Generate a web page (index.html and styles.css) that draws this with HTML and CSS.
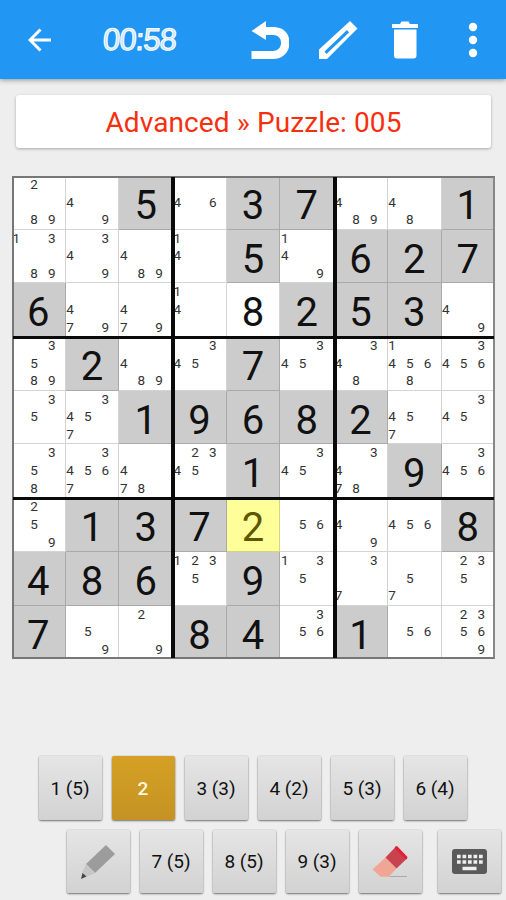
FILE: index.html
```html
<!DOCTYPE html>
<html lang="en">
<head>
<meta charset="utf-8">
<title>Sudoku</title>
<link rel="stylesheet" href="styles.css">
</head>
<body>
<header class="bar">
  <svg class="back" width="24" height="24" viewBox="0 0 24 24"><path d="M23 12H2M12.500 1.500L2 12L12.500 22.500"/></svg>
  <div class="timer">00:58</div>
  <svg class="undo" width="40" height="40" viewBox="0 0 40 40"><path d="M2.500 11L17 1V7H24C33.500 7 40.500 12.500 40.500 22.500S33.500 39 24 39H2.500V31H24C29 31 32 27.500 32 22.800S29 15 24 15H17V20Z"/></svg>
  <svg class="edit" width="40" height="40" viewBox="0 0 40 40"><path fill-rule="evenodd" d="M1 39V29.500L32 1L39.500 8.500L9 39ZM6.500 31.500L8.500 34L31 12.500L29 10Z"/></svg>
  <svg class="trash" width="28" height="38" viewBox="0 0 28 38"><path d="M1 3H9L10.500 .5H17.500L19 3H27V7H1ZM3 8.500H25.500V34.500Q25.500 37.500 22.500 37.500H6Q3 37.500 3 34.500Z"/></svg>
  <svg class="more" width="10" height="36" viewBox="0 0 10 36"><circle cx="5" cy="5" r="4.200"/><circle cx="5" cy="18" r="4.200"/><circle cx="5" cy="31" r="4.200"/></svg>
</header>
<main>
  <h1 class="title"><span>Advanced » Puzzle: 005</span></h1>
  <section class="board" id="board"></section>
  <div class="keys top">
    <div class="key">1 (5)</div><div class="key active">2</div><div class="key">3 (3)</div><div class="key">4 (2)</div><div class="key">5 (3)</div><div class="key">6 (4)</div>
  </div>
  <div class="keys bottom">
    <div class="key"><svg width="36" height="36" viewBox="0 0 36 36"><path fill="#9c9c9c" d="M26 1L35 10L15 29L6 20Z"/><path fill="#c6c6c6" d="M6 20L15 29L6 33L2 29Z"/><path fill="#454545" d="M2.500 29L6.500 32.500L1 35Z"/></svg></div>
    <div class="key">7 (5)</div><div class="key">8 (5)</div><div class="key">9 (3)</div>
    <div class="key"><svg width="36" height="34" viewBox="0 0 36 34"><path fill="#f0a595" d="M13.500 12.500L24.500 23.500L16.500 32H9L.5 24.500Z"/><path fill="#c9434f" d="M13.500 12.500L24 1.500L35.500 13L24.500 23.500Z"/><path fill="#e21f3d" d="M24 1Q24.800 1 25.500 1.500L35 11.500Q35.800 12.500 35 13.500L34 14.500L22.500 3Z"/><path d="M9 31.500H35" stroke="#a9a9b2"/><path d="M9 31.500H18" stroke="#eab58c"/></svg></div>
    <div class="key last"><svg width="35" height="25" viewBox="0 0 35 25"><rect width="35" height="25" rx="3" fill="#5a5a5a"/><path d="M5 7.500H31M5 13H31" stroke="#eee" stroke-width="3.500" stroke-dasharray="3.700 1.800"/><path d="M10.500 19.500H24.500" stroke="#eee" stroke-width="3.500"/></svg></div>
  </div>
</main>
<script src="board.js"></script>
</body>
</html>
```
FILE: board.js
```js
// "gN" is a given, "pN" a placed digit, "sN" the selected one; other strings are pencil marks.
const rows = [
  "289 49 g5 46 g3 g7 489 48 g1",
  "1389 349 489 14 g5 149 g6 g2 g7",
  "g6 479 479 14 p8 g2 g5 g3 49",
  "3589 g2 489 345 g7 345 348 14568 3456",
  "35 3457 g1 g9 g6 g8 g2 457 345",
  "358 34567 478 2345 g1 345 3478 g9 3456",
  "259 g1 g3 g7 s2 56 49 456 g8",
  "g4 g8 g6 1235 g9 135 37 57 235",
  "g7 59 29 g8 g4 356 g1 56 23569"
];
const kinds = { g: "given", p: "placed", s: "selected" };
const board = document.getElementById("board");
for (const row of rows) {
  for (const value of row.split(" ")) {
    const cell = document.createElement("div");
    cell.className = "cell";
    if (kinds[value[0]]) {
      cell.classList.add("big", kinds[value[0]]);
      cell.textContent = value[1];
    } else {
      cell.classList.add("notes");
      for (let n = 1; n <= 9; n++) {
        const mark = document.createElement("span");
        if (value.includes(n)) mark.textContent = n;
        cell.append(mark);
      }
    }
    board.append(cell);
  }
}
for (const name of ["v1", "v2", "h1", "h2"]) {
  const line = document.createElement("i");
  line.className = "line " + name;
  board.append(line);
}
```
FILE: styles.css
```css
* { box-sizing: border-box; }
body { margin: 0; height: 900px; overflow: hidden; background: #eee; font-family: Roboto, "Liberation Sans", sans-serif; }
.bar { height: 79px; background: #2196f3; display: flex; align-items: center; padding: 1px 0 0 28px; box-shadow: 0 1px 5px rgba(0,0,0,.4); }
.bar svg { fill: #fff; flex: none; }
.bar .back { fill: none; stroke: #fff; stroke-width: 3; }
.timer { width: 80px; margin-left: 51px; white-space: nowrap; font: 31px/40px "Liberation Sans", sans-serif; letter-spacing: -.9px; color: #c4e2fc; -webkit-text-stroke: 1.1px #fff; transform: skewX(-4deg); }
.undo { margin-left: 66px; }
.edit { margin-left: 29px; }
.trash { margin-left: 33px; }
.bar .more { margin-left: 49px; }
.title { margin: 16px 15px 0 16px; height: 53px; background: #fff; border-radius: 3px; box-shadow: 0 1px 3px rgba(0,0,0,.3); text-align: center; font-weight: 400; font-size: 28px; line-height: 56px; letter-spacing: .1px; color: #f5300f; }
.board { position: relative; margin: 28px 0 0 12px; width: 483.300px; height: 483.300px; display: grid; grid-template: repeat(9, 53.700px) / repeat(9, 53.700px); background: #fff; }
.board::after { content: ""; position: absolute; inset: 0; border: 2px solid #777; border-right-color: #888; }
.cell { border: solid rgba(0,0,0,.17); border-width: 0 1px 1px 0; }
.big { font-size: 40px; line-height: 60px; text-align: center; color: #111; overflow: hidden; }
.given { background: #ccc; }
.selected { background: #ffff99; color: #5c5700; }
.notes { display: grid; grid-template: repeat(3, 17.700px) / repeat(3, 17.700px); font-size: 13.500px; line-height: 17px; text-align: center; color: #333; }
.notes span { transform: translateX(-4.500px); }
.line { position: absolute; background: #0a0a0a; z-index: 1; }
.v1, .v2 { top: 1px; bottom: 1px; width: 4px; }
.v1 { left: 159px; }
.v2 { left: 320.500px; }
.h1, .h2 { left: 1px; right: 1px; height: 3.500px; }
.h1 { top: 159.500px; }
.h2 { top: 320.500px; }
.keys { display: flex; gap: 10px; }
.top { margin: 97px 0 0 39px; }
.bottom { margin: 10px 0 0 67px; }
.key { width: 63px; height: 63.500px; display: flex; align-items: center; justify-content: center; padding: 0 1px 0 0; border-radius: 2px; background: linear-gradient(#e5e5e5, #d2d2d2); box-shadow: 0 0 1px rgba(0,0,0,.35), 0 1px 2px rgba(0,0,0,.5); font-size: 19px; color: #111; }
.active { background: linear-gradient(#d5a024, #c49323); color: #fff8e0; font-weight: 500; }
.last { margin-left: 6px; }
```
